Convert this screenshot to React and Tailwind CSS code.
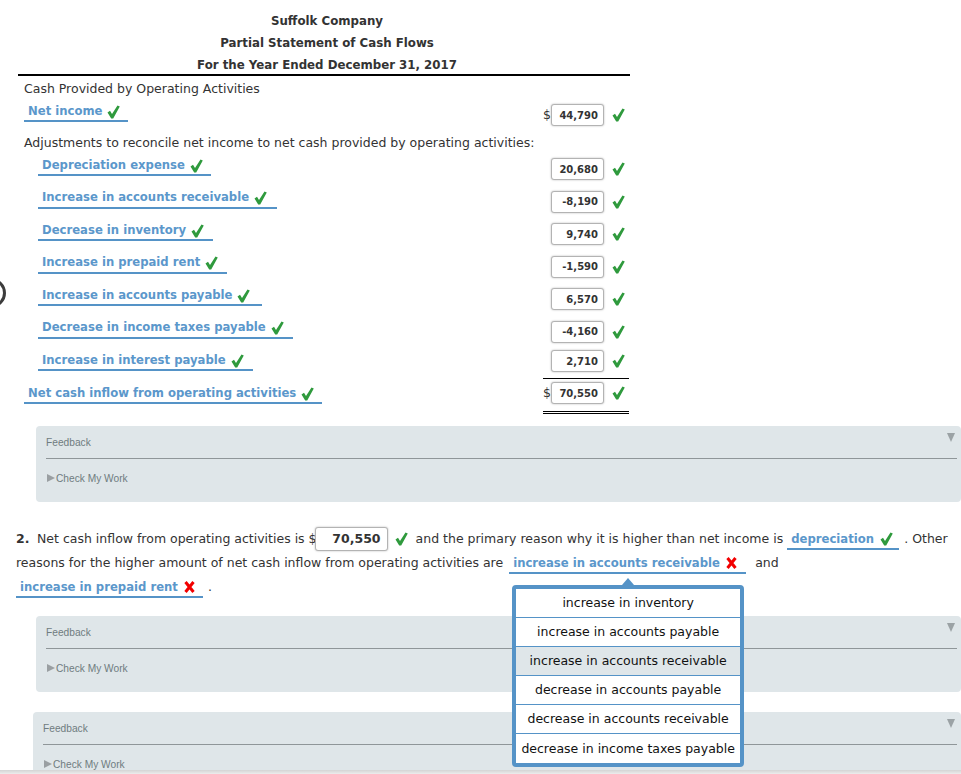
const Check = ({ className = "" }) => (
  <svg viewBox="0 0 13 14" className={"h-[14px] w-[13px] shrink-0 " + className}>
    <path d="M0.5 7.5 L3 5.8 L5 9 L10.5 0.5 L12.8 1.6 L6.2 13.5 L4.2 13.5 Z" fill="#2f9a3d" />
  </svg>
);

const Cross = ({ className = "" }) => (
  <svg viewBox="0 0 11 12" className={"h-[12px] w-[11px] shrink-0 " + className}>
    <path d="M1.5 1 L9.5 11 M9.5 1 L1.5 11" stroke="#f20000" strokeWidth="3" fill="none" />
  </svg>
);

const Box = ({ value, big = false }) => (
  <div
    className={
      "flex shrink-0 items-center justify-end rounded-[3px] border border-[#b3b3b3] bg-white font-bold text-[#333] shadow-[0_0_2px_rgba(0,0,0,0.3)] " +
      (big ? "h-[24px] w-[73px] pr-[6px] text-[12.5px]" : "h-[22px] w-[53px] pr-[5px] text-[10px]")
    }
  >
    {value}
  </div>
);

const Row = ({ label, value, width, indent = true, dollar = false, boxTop = "mt-[3px]", height = "h-[32.5px]" }) => (
  <div className={"flex items-start " + height}>
    <div
      style={{ width }}
      className={"flex h-[21px] items-center gap-[5px] whitespace-nowrap border-b-2 border-[#5593c7] pl-[4px] pt-[2px] text-[11.65px] font-bold text-[#5b97cb] " + (indent ? "ml-[20px]" : "ml-[6px]")}
    >
      <span>{label}</span>
      <Check />
    </div>
    <div className={"ml-auto mr-[1px] flex w-[86px] items-center " + boxTop}>
      <span className="w-[8px] text-[12.5px] text-[#333]">{dollar ? "$" : ""}</span>
      <Box value={value} />
      <Check className="ml-[8px]" />
    </div>
  </div>
);

const Feedback = ({ indent = "ml-[36px]", height = "h-[76px]" }) => (
  <div className={"rounded-[4px] bg-[#dfe6e9] pl-[10px] pr-[4px] font-['Liberation_Sans',sans-serif] text-[10.2px] text-[#6f7c80] " + indent + " " + height}>
    <div className="flex h-[33px] items-start justify-between border-b border-[#8f9699] pt-[10px] leading-[14px]">
      <span>Feedback</span>
      <svg viewBox="0 0 8 9" className="mt-[-3px] mr-[2px] h-[9px] w-[8px]">
        <path d="M0 0 H8 L4 9 Z" fill="#9ba2a5" />
      </svg>
    </div>
    <div className="flex h-[40px] items-center pl-px">
      <svg viewBox="0 0 8 8" className="mt-[-2px] mr-[1px] h-[8px] w-[8px]">
        <path d="M0 0 L8 4 L0 8 Z" fill="#9a9fa2" />
      </svg>
      <span>Check My Work</span>
    </div>
  </div>
);

const options = [
  "increase in inventory",
  "increase in accounts payable",
  "increase in accounts receivable",
  "decrease in accounts payable",
  "decrease in accounts receivable",
  "decrease in income taxes payable",
];

const Dropdown = () => (
  <div className="absolute left-[3px] top-[33px] z-10 w-[232px] rounded-[4px] border-[4px] border-[#5593c7] bg-white font-normal text-[#111]">
    <div className="absolute left-[106px] top-[-11px] h-0 w-0 border-x-[6px] border-b-[7px] border-x-transparent border-b-[#5593c7]" />
    {options.map((o, i) => (
      <div
        key={o}
        className={
          "flex h-[29px] items-center justify-center whitespace-nowrap text-[12.5px] " +
          (i < options.length - 1 ? "border-b border-[#5593c7] " : "") +
          (i === 2 ? "bg-[#dfe6e9]" : "bg-white")
        }
      >
        {o}
      </div>
    ))}
  </div>
);

export default function App() {
  return (
    <div className="relative h-[774px] w-[961px] overflow-hidden bg-white font-['DejaVu_Sans',sans-serif] text-[12.5px] text-[#333]">
      <div className="absolute left-[-24px] top-[278px] h-[30px] w-[30px] rounded-full border-[3px] border-[#3c3c3c]" />

      <div className="ml-[18px] w-[612px]">
        <div className="h-[76px] border-b-2 border-black pl-[6px] pt-[10px] text-center text-[11.8px] font-bold leading-[22px]">
          <div>Suffolk Company</div>
          <div>Partial Statement of Cash Flows</div>
          <div>For the Year Ended December 31, 2017</div>
        </div>
        <div className="pl-[6px] pt-[2px] leading-[22px]">Cash Provided by Operating Activities</div>
        <div className="mt-[1px]">
          <Row label="Net income" value="44,790" width={104} indent={false} dollar height="h-[30px]" />
        </div>
        <div className="mb-[1px] pl-[6px] pt-[1px] leading-[22px]">Adjustments to reconcile net income to net cash provided by operating activities:</div>
        <Row label="Depreciation expense" value="20,680" width={173} />
        <Row label="Increase in accounts receivable" value="-8,190" width={239} />
        <Row label="Decrease in inventory" value="9,740" width={175} />
        <Row label="Increase in prepaid rent" value="-1,590" width={189} />
        <Row label="Increase in accounts payable" value="6,570" width={224} />
        <Row label="Decrease in income taxes payable" value="-4,160" width={255} />
        <Row label="Increase in interest payable" value="2,710" width={215} boxTop="mt-0" height="h-[28px]" />
        <div className="flex items-start">
          <div className="ml-[6px] mt-[5px] flex h-[21px] w-[298px] items-center gap-[5px] whitespace-nowrap border-b-2 border-[#5593c7] pl-[4px] pt-[2px] text-[11.65px] font-bold text-[#5b97cb]">
            <span>Net cash inflow from operating activities</span>
            <Check />
          </div>
          <div className="ml-auto mr-[1px] w-[86px] border-b-[3px] border-t border-double border-b-black border-t-black pb-[7px] pt-[3px]">
            <div className="flex items-center">
              <span className="w-[8px]">$</span>
              <Box value="70,550" />
              <Check className="ml-[8px]" />
            </div>
          </div>
        </div>
      </div>

      <div className="mt-[12px]">
        <Feedback />
      </div>

      <div className="mt-[25px] pl-[16px] leading-[24px]">
        <div className="flex h-[24px] items-center whitespace-nowrap">
          <span className="w-[21px] font-bold">2.</span>
          <span className="mr-[-2px]">Net cash inflow from operating activities is $</span>
          <Box value="70,550" big />
          <Check className="ml-[7px]" />
          <span className="ml-[8px]">and the primary reason why it is higher than net income is</span>
          <div className="ml-[4px] flex h-[22px] w-[112px] items-center gap-[6px] border-b-2 border-[#5593c7] pl-[4px] pt-[2px] text-[11.65px] font-bold text-[#5b97cb]">
            <span>depreciation</span>
            <Check />
          </div>
          <span className="ml-[5px]">. Other</span>
        </div>
        <div className="flex h-[24px] items-center whitespace-nowrap">
          <span>reasons for the higher amount of net cash inflow from operating activities are</span>
          <div className="relative ml-[6px] flex h-[22px] w-[237px] items-center gap-[6px] border-b-2 border-[#5593c7] pl-[4px] pt-[2px] text-[11.65px] font-bold text-[#5b97cb]">
            <span>increase in accounts receivable</span>
            <Cross />
            <Dropdown />
          </div>
          <span className="ml-[9px]">and</span>
        </div>
        <div className="flex h-[24px] items-center whitespace-nowrap">
          <div className="flex h-[22px] w-[187px] items-center gap-[6px] border-b-2 border-[#5593c7] pl-[4px] pt-[2px] text-[11.65px] font-bold text-[#5b97cb]">
            <span>increase in prepaid rent</span>
            <Cross />
          </div>
          <span className="ml-[5px]">.</span>
        </div>
      </div>

      <div className="mt-[17px]">
        <Feedback />
      </div>
      <div className="mt-[20px]">
        <Feedback indent="ml-[33px]" />
      </div>

      <div className="absolute inset-x-0 bottom-0 h-[4px] bg-gradient-to-b from-[#d4d4d4] to-[#ececec]" />
    </div>
  );
}
